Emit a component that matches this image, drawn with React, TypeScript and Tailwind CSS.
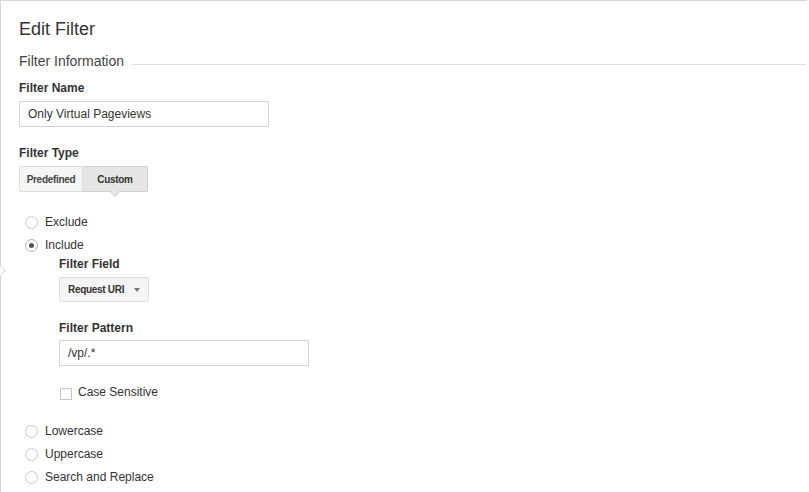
import React from 'react'

function Radio({ label, checked = false }: { label: string; checked?: boolean }) {
  return (
    <div className="flex h-[23px] items-center">
      <span
        className={`ml-[6px] flex h-[13px] w-[13px] items-center justify-center rounded-full border bg-white ${checked ? 'border-[#b4b4b4]' : 'border-[#c8c8c8]'}`}
      >
        {checked && <span className="h-[5px] w-[5px] rounded-full bg-[#555]" />}
      </span>
      <span className="ml-[7px] text-[12px] leading-[23px] text-[#333]">{label}</span>
    </div>
  )
}

export default function App() {
  return (
    <div className="h-[492px] w-[809px] overflow-hidden bg-white font-['Liberation_Sans',Arial,sans-serif]">
      <div className="relative h-[493px] w-[807px] border-l border-t border-[#d6d6d6] pl-[18px] pr-[1px] pt-[17px]">
        {/* side notch */}
        <span className="absolute left-[-6px] top-[265px] h-[9px] w-[9px] rotate-45 border border-[#d6d6d6] bg-white" />

        <h1 className="text-[18px] font-normal leading-[22px] text-[#333]">Edit Filter</h1>

        <div className="mt-[13px] flex items-start">
          <span className="text-[14px] leading-[17px] text-[#444]">Filter Information</span>
          <span className="ml-[8px] mt-[11px] h-px flex-1 bg-[#dedede]" />
        </div>

        <div className="mt-[11px] text-[12px] font-bold leading-[14px] text-[#333]">Filter Name</div>
        <div className="mt-[6px] flex h-[26px] w-[250px] items-center border border-[#d4d4d4] px-[8px] text-[12px] text-[#333]">
          Only Virtual Pageviews
        </div>

        <div className="mt-[19px] text-[12px] font-bold leading-[14px] text-[#333]">Filter Type</div>
        <div className="relative mt-[6px] flex h-[26px] w-[129px]">
          <div className="flex w-[64px] items-center justify-center rounded-l-[2px] border border-[#dcdcdc] bg-[#f5f5f5] text-[10px] font-bold tracking-[-0.3px] text-[#444]">
            Predefined
          </div>
          <div className="flex w-[65px] items-center justify-center rounded-r-[2px] border border-l-0 border-[#d0d0d0] bg-[#e6e6e6] text-[10px] font-bold tracking-[-0.3px] text-[#333]">
            Custom
          </div>
          <span className="absolute left-[92px] top-[21px] h-[8px] w-[8px] rotate-45 border-b border-r border-[#d0d0d0] bg-[#e6e6e6]" />
        </div>

        <div className="mt-[19px]">
          <Radio label="Exclude" />
          <Radio label="Include" checked />
        </div>

        <div className="pl-[40px]">
          <div className="text-[12px] font-bold leading-[14px] text-[#333]">Filter Field</div>
          <div className="mt-[6px] flex h-[25px] w-[90px] items-center rounded-[2px] border border-[#dcdcdc] bg-[#f5f5f5] pl-[8px] pr-[8px] text-[10px] font-bold tracking-[-0.3px] text-[#333]">
            <span className="flex-1">Request URI</span>
            <span className="h-0 w-0 border-l-[3px] border-r-[3px] border-t-[4px] border-l-transparent border-r-transparent border-t-[#777]" />
          </div>

          <div className="mt-[19px] text-[12px] font-bold leading-[14px] text-[#333]">Filter Pattern</div>
          <div className="mt-[5px] flex h-[26px] w-[250px] items-center border border-[#d4d4d4] px-[8px] text-[12px] text-[#333]">
            /vp/.*
          </div>

          <div className="mt-[19px] flex items-start">
            <span className="ml-[1px] mt-[3px] h-[12px] w-[12px] border border-[#c4c4c4] bg-white" />
            <span className="ml-[6px] text-[12px] leading-[14px] text-[#333]">Case Sensitive</span>
          </div>
        </div>

        <div className="mt-[20px]">
          <Radio label="Lowercase" />
          <Radio label="Uppercase" />
          <Radio label="Search and Replace" />
        </div>
      </div>
    </div>
  )
}
